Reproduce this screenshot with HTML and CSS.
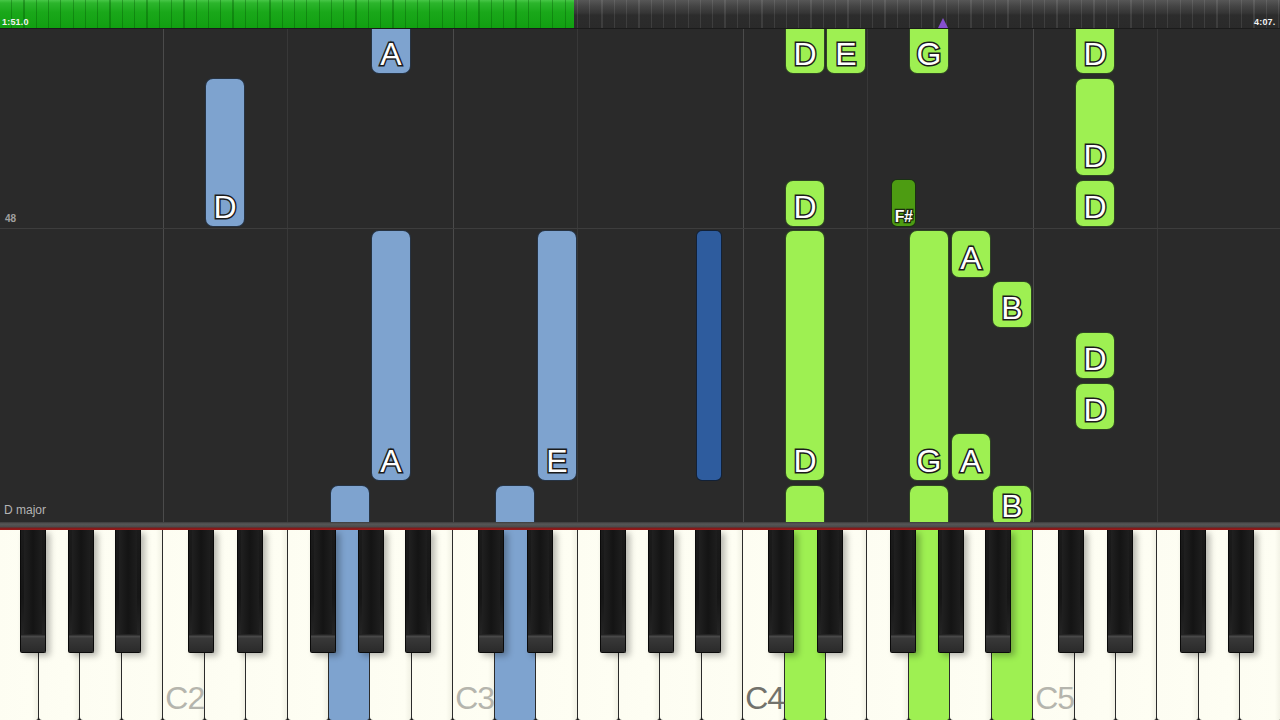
FILE: index.html
```html
<!DOCTYPE html>
<html>
<head>
<meta charset="utf-8">
<link rel="stylesheet" href="styles.css">
</head>
<body>
<div class="app">
  <div class="topbar">
    <div class="progress" style="width:574px"></div>
    <span class="time time-left">1:51.0</span>
    <span class="marker" style="left:938px"></span>
    <span class="time time-right">4:07.</span>
  </div>

  <div class="roll">
    <div class="vline c" style="left:163px"></div>
    <div class="vline f" style="left:287px"></div>
    <div class="vline c" style="left:453px"></div>
    <div class="vline f" style="left:577px"></div>
    <div class="vline c" style="left:743px"></div>
    <div class="vline f" style="left:867px"></div>
    <div class="vline c" style="left:1033px"></div>
    <div class="vline f" style="left:1157px"></div>
    <div class="hline" style="top:199px"></div>
    <span class="measure" style="top:184px">48</span>

    <!-- left hand -->
    <div class="note lh" style="left:371px;top:-20px;height:65px"><span>A</span></div>
    <div class="note lh" style="left:205px;top:49px;height:149px"><span>D</span></div>
    <div class="note lh" style="left:371px;top:201px;height:251px"><span>A</span></div>
    <div class="note lh" style="left:537px;top:201px;height:251px"><span>E</span></div>
    <div class="note lh sharp" style="left:696px;top:201px;height:251px"></div>
    <div class="note lh" style="left:330px;top:456px;height:60px"></div>
    <div class="note lh" style="left:495px;top:456px;height:60px"></div>

    <!-- right hand -->
    <div class="note rh" style="left:785px;top:-20px;height:65px"><span>D</span></div>
    <div class="note rh" style="left:826px;top:-20px;height:65px"><span>E</span></div>
    <div class="note rh" style="left:909px;top:-20px;height:65px"><span>G</span></div>
    <div class="note rh" style="left:1075px;top:-20px;height:65px"><span>D</span></div>
    <div class="note rh" style="left:1075px;top:49px;height:98px"><span>D</span></div>
    <div class="note rh" style="left:785px;top:151px;height:47px"><span>D</span></div>
    <div class="note rh sharp" style="left:891px;top:150px;height:48px"><span class="small">F#</span></div>
    <div class="note rh" style="left:1075px;top:151px;height:47px"><span>D</span></div>
    <div class="note rh" style="left:785px;top:201px;height:251px"><span>D</span></div>
    <div class="note rh" style="left:909px;top:201px;height:251px"><span>G</span></div>
    <div class="note rh" style="left:951px;top:201px;height:48px"><span>A</span></div>
    <div class="note rh" style="left:992px;top:252px;height:47px"><span>B</span></div>
    <div class="note rh" style="left:1075px;top:303px;height:47px"><span>D</span></div>
    <div class="note rh" style="left:1075px;top:354px;height:47px"><span>D</span></div>
    <div class="note rh" style="left:951px;top:404px;height:48px"><span>A</span></div>
    <div class="note rh" style="left:992px;top:456px;height:41px"><span>B</span></div>
    <div class="note rh" style="left:785px;top:456px;height:60px"></div>
    <div class="note rh" style="left:909px;top:456px;height:60px"></div>

    <span class="key-name">D major</span>
  </div>

  <div class="kb-rail"></div>

  <div class="keyboard">
    <div class="whites">
      <div class="wkey"></div><div class="wkey"></div><div class="wkey"></div><div class="wkey"></div>
      <div class="wkey"><span class="clabel">C2</span></div><div class="wkey"></div><div class="wkey"></div><div class="wkey"></div><div class="wkey blue"></div><div class="wkey"></div><div class="wkey"></div>
      <div class="wkey"><span class="clabel">C3</span></div><div class="wkey blue"></div><div class="wkey"></div><div class="wkey"></div><div class="wkey"></div><div class="wkey"></div><div class="wkey"></div>
      <div class="wkey"><span class="clabel mid">C4</span></div><div class="wkey green"></div><div class="wkey"></div><div class="wkey"></div><div class="wkey green"></div><div class="wkey"></div><div class="wkey green"></div>
      <div class="wkey"><span class="clabel">C5</span></div><div class="wkey"></div><div class="wkey"></div><div class="wkey"></div><div class="wkey"></div><div class="wkey"></div>
    </div>
    <div class="bkey" style="left:20px"></div>
    <div class="bkey" style="left:68px"></div>
    <div class="bkey" style="left:115px"></div>
    <div class="bkey" style="left:188px"></div>
    <div class="bkey" style="left:237px"></div>
    <div class="bkey" style="left:310px"></div>
    <div class="bkey" style="left:358px"></div>
    <div class="bkey" style="left:405px"></div>
    <div class="bkey" style="left:478px"></div>
    <div class="bkey" style="left:527px"></div>
    <div class="bkey" style="left:600px"></div>
    <div class="bkey" style="left:648px"></div>
    <div class="bkey" style="left:695px"></div>
    <div class="bkey" style="left:768px"></div>
    <div class="bkey" style="left:817px"></div>
    <div class="bkey" style="left:890px"></div>
    <div class="bkey" style="left:938px"></div>
    <div class="bkey" style="left:985px"></div>
    <div class="bkey" style="left:1058px"></div>
    <div class="bkey" style="left:1107px"></div>
    <div class="bkey" style="left:1180px"></div>
    <div class="bkey" style="left:1228px"></div>
  </div>
</div>
</body>
</html>
```

FILE: styles.css
```css
* { box-sizing: border-box; }
html, body {
  margin: 0;
  padding: 0;
  width: 1280px;
  height: 720px;
  overflow: hidden;
  background: #2a2a2a;
  font-family: "Liberation Sans", Arial, sans-serif;
}
.app {
  display: flex;
  flex-direction: column;
  width: 1280px;
  height: 720px;
}

/* ---------- top progress bar ---------- */
.topbar {
  position: relative;
  flex: 0 0 29px;
  border-bottom: 1px solid #1b1b1b;
  background:
    repeating-linear-gradient(90deg, transparent 0 11px, rgba(255,255,255,0.09) 11px 12.3px),
    linear-gradient(#575757 0, #454545 6px, #353535 13px, #2c2c2c 15px, #2a2a2a 100%);
  overflow: hidden;
}
.progress {
  height: 100%;
  background:
    repeating-linear-gradient(90deg, transparent 0 11px, rgba(0,80,0,0.35) 11px 12.3px),
    linear-gradient(#48c848 0, #2cb52c 3px, #1aa81a 12px, #11a011 100%);
}
.time {
  position: absolute;
  top: 17px;
  font-size: 9px;
  font-weight: bold;
  color: #f2f2f2;
  letter-spacing: 0.2px;
}
.time-left { left: 2px; }
.time-right { left: 1254px; }
.marker {
  position: absolute;
  top: 18px;
  width: 0;
  height: 0;
  border-left: 5px solid transparent;
  border-right: 5px solid transparent;
  border-bottom: 10px solid #8650cf;
}

/* ---------- piano roll ---------- */
.roll {
  position: relative;
  flex: 0 0 493px;
  background: #2a2a2a;
  overflow: hidden;
}
.vline {
  position: absolute;
  top: 0;
  bottom: 0;
  width: 1px;
}
.vline.c { background: #4b4b4b; }
.vline.f { background: #383838; }
.hline {
  position: absolute;
  left: 0;
  right: 0;
  height: 1px;
  background: #3d3d3d;
}
.measure {
  position: absolute;
  left: 5px;
  font-size: 10px;
  font-weight: bold;
  color: #a0a0a0;
}
.key-name {
  position: absolute;
  left: 4px;
  bottom: 5px;
  font-size: 12px;
  color: #b4b4b4;
}

.note {
  position: absolute;
  width: 40px;
  border-radius: 8px;
  border: 1px solid rgba(10, 14, 20, 0.75);
  display: flex;
  align-items: flex-end;
  justify-content: center;
  padding-bottom: 3px;
}
.note.lh { background: #7ea3cf; }
.note.lh.sharp { background: #2e5c9e; width: 26px; border-radius: 6px; }
.note.rh { background: #9ef052; }
.note.rh.sharp { background: #4d9c12; width: 25px; border-radius: 6px; padding-bottom: 1px; }
.note span {
  font-size: 32px;
  line-height: 1;
  color: #ffffff;
  -webkit-text-stroke: 3px #1b1b1b;
  paint-order: stroke fill;
}
.note span.small {
  font-size: 16px;
  font-weight: bold;
  -webkit-text-stroke: 2.5px #1b2a10;
  letter-spacing: -0.5px;
}

/* ---------- keyboard ---------- */
.kb-rail {
  flex: 0 0 8px;
  background: linear-gradient(#3c3c3c 0, #575757 2px, #4a4a4a 5px, #7a1c1c 6px, #a01818 8px);
}
.keyboard {
  position: relative;
  flex: 0 0 190px;
  overflow: hidden;
  background: #1a1a1a;
}
.whites {
  display: flex;
  margin-left: -2.41px;
  height: 100%;
}
.wkey {
  position: relative;
  flex: 0 0 41.4286px;
  height: 100%;
  background: linear-gradient(90deg, #fdfdf2 0, #fefef3 85%, #f1f1e4 100%);
  border-right: 1.5px solid #2b2b2b;
  border-radius: 0 0 3px 3px;
}
.wkey.blue { background: #7ea3cf; }
.wkey.green { background: #9ef052; }
.clabel {
  position: absolute;
  left: 2px;
  bottom: 6px;
  font-size: 32px;
  line-height: 1;
  color: #b5b5ad;
  letter-spacing: -1px;
}
.clabel.mid { color: #72726b; }
.bkey {
  position: absolute;
  top: 0;
  width: 26px;
  height: 123px;
  border: 1px solid #0a0a0a;
  border-top: none;
  border-radius: 0 0 2px 2px;
  background:
    linear-gradient(#1b1b1b 0, #161616 55%, #242424 86%, #4a4a4a 87%, #383838 89%, #2a2a2a 100%);
  box-shadow: 4px 3px 6px rgba(0, 0, 0, 0.28);
}
.bkey::before {
  content: "";
  position: absolute;
  left: 3px;
  right: 3px;
  top: 0;
  bottom: 18px;
  background: linear-gradient(90deg, #202020, #141414 50%, #1e1e1e);
}
```
